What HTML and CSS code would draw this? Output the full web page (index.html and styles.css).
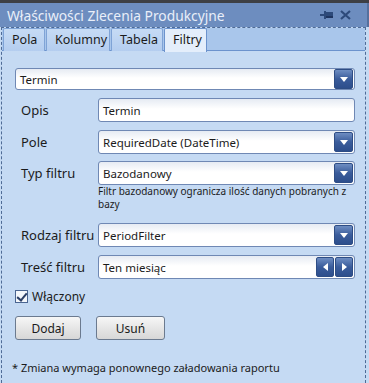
FILE: index.html
```html
<!DOCTYPE html>
<html lang="pl">

<head>
    <meta charset="UTF-8">
    <title>Właściwości Zlecenia Produkcyjne</title>
    <link rel="stylesheet" href="styles.css">
</head>

<body>
    <div class="window">
        <div class="titlebar">
            <span class="title">Właściwości Zlecenia Produkcyjne</span>
            <span class="tools">
                <svg width="14" height="10" viewBox="0 0 14 10">
                    <rect x="0" y="4" width="4" height="2" fill="#2d4a7a"/>
                    <rect x="4" y="1" width="2" height="8" fill="#2d4a7a"/>
                    <rect x="6" y="2" width="7" height="5" fill="#2d4a7a"/>
                    <rect x="6" y="6" width="7" height="2" fill="#1f3560"/>
                </svg>
                <svg width="11" height="10" viewBox="0 0 11 10">
                    <path d="M1 1 L10 9 M10 1 L1 9" stroke="#2d4a7a" stroke-width="2.2"/>
                </svg>
            </span>
        </div>
        <div class="panel">
            <ul class="tabs">
                <li>Pola</li>
                <li>Kolumny</li>
                <li>Tabela</li>
                <li class="active">Filtry</li>
            </ul>
            <div class="content">
                <div class="combo wide">
                    <span class="value">Termin</span>
                    <span class="dropbtn"></span>
                </div>
                <div class="row">
                    <label>Opis</label>
                    <div class="field"><span class="value">Termin</span></div>
                </div>
                <div class="row tight">
                    <label>Pole</label>
                    <div class="combo"><span class="value">RequiredDate (DateTime)</span><span class="dropbtn"></span></div>
                </div>
                <div class="row">
                    <label>Typ filtru</label>
                    <div class="combo"><span class="value">Bazodanowy</span><span class="dropbtn"></span></div>
                </div>
                <p class="hint">Filtr bazodanowy ogranicza ilość danych pobranych z bazy</p>
                <div class="row">
                    <label>Rodzaj filtru</label>
                    <div class="combo"><span class="value">PeriodFilter</span><span class="dropbtn"></span></div>
                </div>
                <div class="row">
                    <label>Treść filtru</label>
                    <div class="combo"><span class="value">Ten miesiąc</span><span class="spin left"></span><span class="spin right"></span></div>
                </div>
                <label class="check"><span class="box"></span>Włączony</label>
                <div class="buttons">
                    <button class="btn">Dodaj</button>
                    <button class="btn second">Usuń</button>
                </div>
                <p class="note">* Zmiana wymaga ponownego załadowania raportu</p>
            </div>
        </div>
    </div>
</body>

</html>
```
FILE: styles.css
```css
* {
    padding: 0;
    margin: 0;
    list-style: none;
    box-sizing: border-box;
}

body {
    font-family: "Noto Sans", "DejaVu Sans", sans-serif;
    font-size: 12px;
    color: #1b1b1b;
    background: #c5daf3;
}

.window {
    width: 369px;
    height: 383px;
    border-top: 3px solid #3d3f44;
    background: #c5daf3;
    display: flex;
    flex-direction: column;
    overflow: hidden;
}

.titlebar {
    height: 24px;
    background: #6d8dbf;
    border-right: 2px solid #55709d;
    display: flex;
    align-items: center;
    justify-content: space-between;
    padding: 0 16px 0 7px;
}

.titlebar .title {
    color: #e9eff9;
    font-size: 13.8px;
}

.titlebar .tools {
    display: flex;
    gap: 6px;
    align-items: center;
}

.panel {
    flex: 1;
    margin: 0 3px 0 1px;
    border: 1px dashed #4f6b96;
    border-bottom: none;
    display: flex;
    flex-direction: column;
}

.tabs {
    height: 23px;
    display: flex;
    gap: 1px;
    padding: 0 0 0 1px;
    background: #a9c6eb;
    border-bottom: 1px solid #6c93cd;
}

.tabs li {
    height: 23px;
    padding: 0 8px;
    line-height: 21px;
    border: 1px solid #7fa3d6;
    border-bottom: none;
    border-radius: 2px 2px 0 0;
    background: linear-gradient(#c6dbf5, #b4cdef);
    font-size: 12.5px;
    text-align: center;
}

.tabs li:nth-child(1) { width: 42px; }
.tabs li:nth-child(2) { width: 64px; }
.tabs li:nth-child(3) { width: 52px; }

.tabs li.active {
    width: 43px;
    height: 24px;
    background: #e4eefb;
    border-color: #6c93cd;
    margin-bottom: -1px;
}

.content {
    flex: 1;
    padding: 17px 10px 0 13px;
    display: flex;
    flex-direction: column;
}

.combo,
.field {
    position: relative;
    height: 24px;
    flex: 1;
    border: 1px solid #6f88b4;
    border-radius: 3px;
    background: linear-gradient(#e6ebf3, #ffffff 45%);
    display: flex;
    align-items: center;
    padding: 0 4px;
}

.combo.wide {
    flex: none;
    height: 22px;
    margin-bottom: 8px;
}

.value {
    flex: 1;
    font-size: 11.5px;
}

.dropbtn,
.spin {
    width: 19px;
    height: 20px;
    border: 1px solid #2e4d85;
    border-radius: 2px;
    background: linear-gradient(#6e8dc2, #3a5c9b 50%, #2d4e8c);
    display: flex;
    align-items: center;
    justify-content: center;
    margin-right: -3px;
}

.dropbtn::after {
    content: "";
    border-left: 4px solid transparent;
    border-right: 4px solid transparent;
    border-top: 5px solid #fff;
}

.spin {
    width: 18px;
    margin-right: 0;
}

.spin.right {
    margin-right: -3px;
    margin-left: 1px;
}

.spin.left::after {
    content: "";
    border-top: 4px solid transparent;
    border-bottom: 4px solid transparent;
    border-right: 5px solid #fff;
}

.spin.right::after {
    content: "";
    border-top: 4px solid transparent;
    border-bottom: 4px solid transparent;
    border-left: 5px solid #fff;
}

.row {
    display: flex;
    align-items: center;
    height: 24px;
    margin-bottom: 8px;
}

.row.tight {
    margin-bottom: 7px;
}

.row label {
    width: 83px;
    padding-left: 6px;
    font-size: 13px;
}

.hint {
    margin: -8px 0 12px 83px;
    font-size: 10px;
    line-height: 13px;
}

.check {
    display: flex;
    align-items: center;
    gap: 4px;
    height: 14px;
    margin-top: 2px;
    font-size: 12px;
}

.check .box {
    width: 13px;
    height: 13px;
    border: 1px solid #4a6591;
    background: #f4f7fb;
    position: relative;
}

.check .box::after {
    content: "";
    position: absolute;
    left: 3px;
    top: 0;
    width: 4px;
    height: 8px;
    border-right: 2px solid #2b3f66;
    border-bottom: 2px solid #2b3f66;
    transform: rotate(40deg);
}

.buttons {
    display: flex;
    gap: 15px;
    margin-top: 13px;
}

.btn {
    width: 66px;
    height: 24px;
    border: 1px solid #6b7a8f;
    border-radius: 3px;
    background: linear-gradient(#f7f7f7, #e6e6e6 50%, #d7d7d7);
    font-family: inherit;
    font-size: 12px;
    color: #1b1b1b;
}

.btn.second {
    width: 69px;
}

.note {
    margin: 20px 0 0 -3px;
    font-size: 11px;
}
```
